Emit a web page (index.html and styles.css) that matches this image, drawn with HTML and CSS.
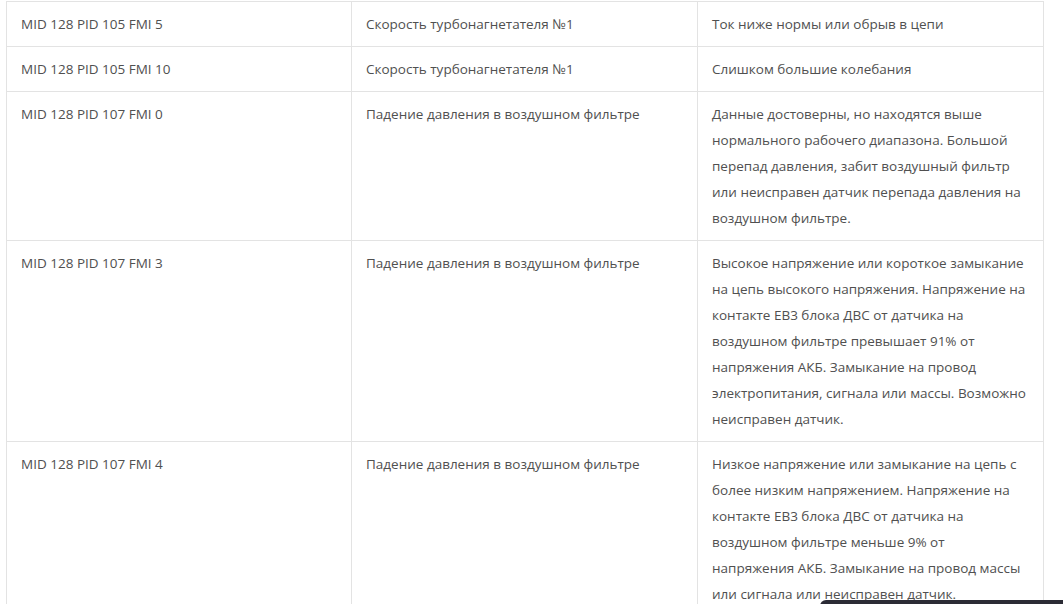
FILE: index.html
```html
<!DOCTYPE html>
<html lang="ru">
<head>
  <meta charset="UTF-8">
  <meta name="viewport" content="width=device-width, initial-scale=1.0">
  <title>Коды неисправностей</title>
  <link rel="stylesheet" href="styles.css">
</head>
<body>
  <div class="wrap">
    <table class="codes">
      <tbody>
        <tr>
          <td>MID 128 PID 105 FMI 5</td>
          <td>Скорость турбонагнетателя №1</td>
          <td>Ток ниже нормы или обрыв в цепи</td>
        </tr>
        <tr>
          <td>MID 128 PID 105 FMI 10</td>
          <td>Скорость турбонагнетателя №1</td>
          <td>Слишком большие колебания</td>
        </tr>
        <tr>
          <td>MID 128 PID 107 FMI 0</td>
          <td>Падение давления в воздушном фильтре</td>
          <td>Данные достоверны, но находятся выше нормального рабочего диапазона. Большой перепад давления, забит воздушный фильтр или неисправен датчик перепада давления на воздушном фильтре.</td>
        </tr>
        <tr>
          <td>MID 128 PID 107 FMI 3</td>
          <td>Падение давления в воздушном фильтре</td>
          <td>Высокое напряжение или короткое замыкание на цепь высокого напряжения. Напряжение на контакте EB3 блока ДВС от датчика на воздушном фильтре превышает 91% от напряжения АКБ. Замыкание на провод электропитания, сигнала или массы. Возможно неисправен датчик.</td>
        </tr>
        <tr>
          <td>MID 128 PID 107 FMI 4</td>
          <td>Падение давления в воздушном фильтре</td>
          <td>Низкое напряжение или замыкание на цепь с более низким напряжением. Напряжение на контакте EB3 блока ДВС от датчика на воздушном фильтре меньше 9% от напряжения АКБ. Замыкание на провод массы или сигнала или неисправен датчик.</td>
        </tr>
      </tbody>
    </table>
  </div>

  <!-- bottom toast peeking in -->
  <div class="toast"></div>
</body>
</html>
```

FILE: styles.css
```css
body {
  font-family: 'Open Sans', 'Noto Sans', sans-serif;
  margin: 0;
  padding: 0;
  background-color: #fff;
  color: #505050;
  overflow: hidden;
}
.wrap {
  padding: 1px 0 0 6px;
}
.codes {
  width: 1038px;
  border-collapse: collapse;
  table-layout: fixed;
  font-size: 13.5px;
  line-height: 26px;
}
.codes td {
  border: 1px solid #e3e3e3;
  padding: 9px 14px 9px 14px;
  vertical-align: top;
}
.codes td:first-child {
  width: 316px;
}
.codes td:nth-child(2) {
  width: 317px;
}
.toast {
  position: fixed;
  left: 820px;
  bottom: -20px;
  width: 260px;
  height: 24px;
  background-color: #2b2b35;
  border-radius: 6px 0 0 0;
}
```
